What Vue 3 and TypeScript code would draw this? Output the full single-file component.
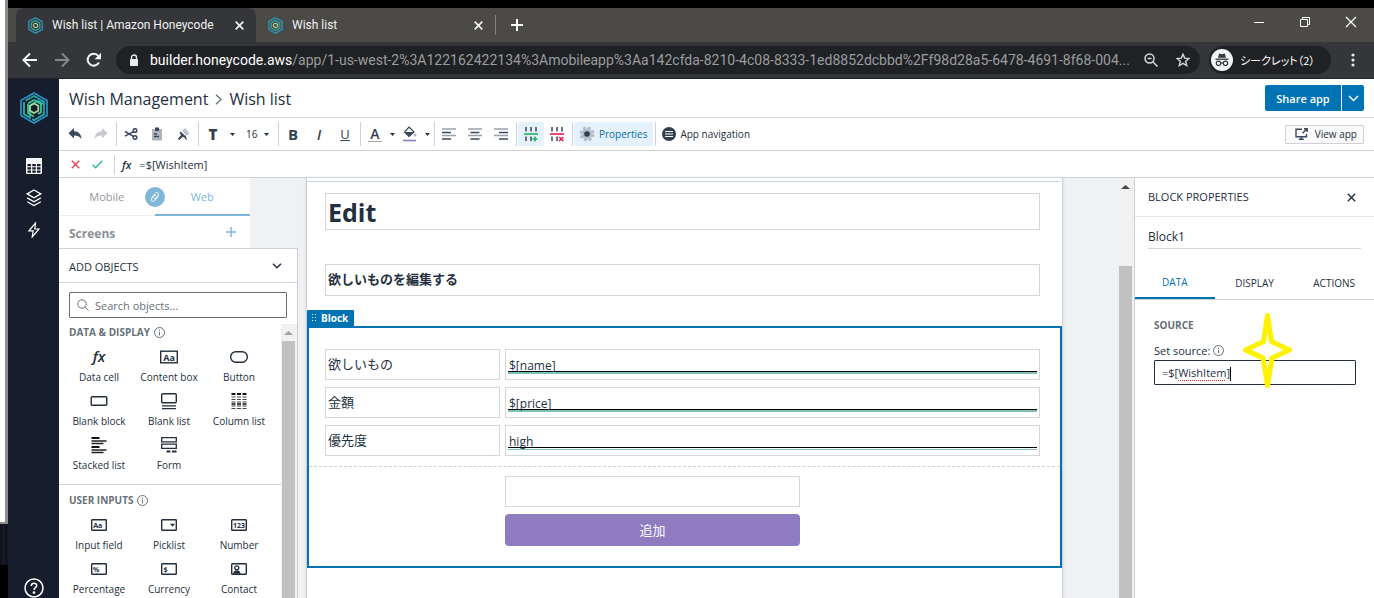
<script setup lang="ts">
import { ref } from 'vue'

interface PaletteItem {
  label: string
  icon: string
}
interface PaletteSection {
  title: string
  items: PaletteItem[]
}
interface FieldRow {
  id: string
  label: string
  value: string
  thin?: boolean
}

const box = '<rect x="4.7" y="2.7" width="14.6" height="10.6" rx="0.6" fill="none" stroke="#232f3e" stroke-width="1.4"/>'
const font = 'font-family="Open Sans, sans-serif" font-weight="700" fill="#232f3e"'

const paletteIcons: Record<string, string> = {
  fx: `<text x="12" y="13" text-anchor="middle" font-family="Open Sans, sans-serif" font-style="italic" font-weight="600" font-size="15" fill="#232f3e">fx</text>`,
  content: `<rect x="3.7" y="2.2" width="16.6" height="11.6" fill="none" stroke="#232f3e" stroke-width="1.4"/><text x="12" y="11.5" text-anchor="middle" font-size="9" ${font}>Aa</text>`,
  button: '<rect x="3.7" y="2.7" width="16.6" height="10.6" rx="5" fill="none" stroke="#232f3e" stroke-width="1.4"/>',
  block: '<rect x="4.2" y="3.7" width="15.6" height="8.6" rx="1" fill="none" stroke="#232f3e" stroke-width="1.4"/>',
  list: '<rect x="4.7" y="0.7" width="14.6" height="9" rx="1" fill="none" stroke="#232f3e" stroke-width="1.4"/><path d="M5 12.8h14M5 15.6h14" stroke="#232f3e" stroke-width="1.3"/>',
  columns: '<path d="M4.5 1h15" stroke="#111" stroke-width="2" stroke-dasharray="4 1.5"/><path d="M4.5 4h15M4.5 6.5h15M4.5 9h15M4.5 13h15M4.5 15.5h15" stroke="#444" stroke-width="1.2" stroke-dasharray="4 1.5"/><path d="M4.5 11h15" stroke="#111" stroke-width="1.5" stroke-dasharray="4 1.5"/>',
  stacked: '<path d="M4.5 1h8M4.5 10h8" stroke="#111" stroke-width="2.2"/><path d="M4.5 4h15M4.5 6.5h12M4.5 13h15M4.5 15.5h12" stroke="#222" stroke-width="1.3"/>',
  form: '<path d="M4.7 .7h14.6v4.2H4.7zM4.7 7.2h14.6v4.2H4.7z" fill="none" stroke="#232f3e" stroke-width="1.3"/><path d="M9.5 14.5h4M15 14.5h4.5" stroke="#232f3e" stroke-width="1.8"/>',
  input: `${box}<text x="6.2" y="10.7" font-size="7" ${font}>Aa</text>`,
  picklist: `${box}<path d="M13 6.8h5l-2.500 3z" fill="#232f3e"/>`,
  number: `${box}<text x="12" y="10.7" text-anchor="middle" font-size="7" ${font}>123</text>`,
  percent: `${box}<text x="6" y="10.7" font-size="7" ${font}>%</text>`,
  currency: `${box}<text x="6.5" y="10.7" font-size="7" ${font}>$</text>`,
  contact: `${box}<circle cx="9.8" cy="6.8" r="2" fill="none" stroke="#232f3e" stroke-width="1.3"/><path d="M6 12.8c.5-2.8 2-3.3 3.800-3.3s3.300.5 3.800 3.300z" fill="#232f3e"/>`,
}

const sections: PaletteSection[] = [
  {
    title: 'DATA & DISPLAY',
    items: [
      { label: 'Data cell', icon: 'fx' },
      { label: 'Content box', icon: 'content' },
      { label: 'Button', icon: 'button' },
      { label: 'Blank block', icon: 'block' },
      { label: 'Blank list', icon: 'list' },
      { label: 'Column list', icon: 'columns' },
      { label: 'Stacked list', icon: 'stacked' },
      { label: 'Form', icon: 'form' },
    ],
  },
  {
    title: 'USER INPUTS',
    items: [
      { label: 'Input field', icon: 'input' },
      { label: 'Picklist', icon: 'picklist' },
      { label: 'Number', icon: 'number' },
      { label: 'Percentage', icon: 'percent' },
      { label: 'Currency', icon: 'currency' },
      { label: 'Contact', icon: 'contact' },
    ],
  },
]

const fields = ref<FieldRow[]>([
  { id: 'name', label: '欲しいもの', value: '$[name]' },
  { id: 'price', label: '金額', value: '$[price]' },
  { id: 'priority', label: '優先度', value: 'high', thin: true },
])

const browserTabs = [
  { title: 'Wish list | Amazon Honeycode', active: true },
  { title: 'Wish list', active: false },
]

const propertyTabs = ['DATA', 'DISPLAY', 'ACTIONS']
const activeTab = ref('DATA')
const formula = ref('=$[WishItem]')
const fontSize = ref('16')
const blockName = ref('Block1')
const search = ref('')
const extra = ref('')
</script>

<template>
  <div class="desktop">
    <div class="behind" aria-hidden="true">
      <div class="behind-window"></div>
      <div class="behind-dark"></div>
    </div>
    <div class="browser">
      <header class="chrome">
        <div class="tabstrip">
          <div v-for="tab in browserTabs" :key="tab.title" class="btab" :class="{ active: tab.active }">
            <svg class="favicon" viewBox="0 0 28 32" width="15" height="17" fill="none">
              <path d="M14 1.500L26.500 8.500v15L14 30.500 1.500 23.500v-15z" stroke="#2f8fb5" stroke-width="2.600" />
              <path d="M14 6.500l8 4.700v9.600l-8 4.700-8-4.700v-9.600z" stroke="#2fa79b" stroke-width="2.400" />
              <circle cx="14" cy="16" r="4" stroke="#a8c98a" stroke-width="2.400" />
            </svg>
            <span class="btab-title">{{ tab.title }}</span>
            <button class="plain btab-close" aria-label="Close tab">
              <svg width="9" height="9" viewBox="0 0 9 9"><path d="M.7.7l7.600 7.600M8.300.7L.7 8.300" stroke="#f1f1f1" stroke-width="1.700" /></svg>
            </button>
          </div>
          <span class="btab-sep"></span>
          <button class="plain new-tab" aria-label="New tab">
            <svg width="12" height="12" viewBox="0 0 12 12"><path d="M6 0v12M0 6h12" stroke="#fff" stroke-width="2" /></svg>
          </button>
          <div class="window-buttons">
            <button class="plain" aria-label="Minimize"><svg width="12" height="12" viewBox="0 0 12 12"><path d="M1 6.500h10" stroke="#fff" /></svg></button>
            <button class="plain" aria-label="Restore"><svg width="12" height="12" viewBox="0 0 12 12" fill="none" stroke="#fff"><path d="M1.500 3.500h7v7h-7zM3.500 3.500v-2h7v7h-2" /></svg></button>
            <button class="plain" aria-label="Close"><svg width="12" height="12" viewBox="0 0 12 12"><path d="M1 1l10 10M11 1L1 11" stroke="#fff" stroke-width="1.200" /></svg></button>
          </div>
        </div>
        <div class="addressbar">
          <button class="plain nav" aria-label="Back"><svg width="16" height="16" viewBox="0 0 16 16" fill="none" stroke="#f1f3f4" stroke-width="2"><path d="M15 8H2.500M8 1.500L1.500 8 8 14.500" /></svg></button>
          <button class="plain nav" aria-label="Forward"><svg width="16" height="16" viewBox="0 0 16 16" fill="none" stroke="#85878a" stroke-width="2"><path d="M1 8h12.500M8 1.500L14.500 8 8 14.500" /></svg></button>
          <button class="plain nav" aria-label="Reload">
            <svg width="16" height="16" viewBox="0 0 16 16"><path d="M13 10.500A6 6 0 1 1 12.300 3.800" fill="none" stroke="#f1f3f4" stroke-width="2" /><path d="M15 .8v6.400H8.600z" fill="#f1f3f4" /></svg>
          </button>
          <div class="omnibox">
            <svg width="10" height="13" viewBox="0 0 10 13"><rect x="1" y="5" width="8" height="7" rx="1" fill="#e8eaed" /><path d="M2.500 5.500V3.500a2.500 2.500 0 0 1 5 0v2" fill="none" stroke="#e8eaed" stroke-width="1.400" /></svg>
            <span class="url"><b>builder.honeycode.aws</b>/app/1-us-west-2%3A122162422134%3Amobileapp%3Aa142cfda-8210-4c08-8333-1ed8852dcbbd%2Ff98d28a5-6478-4691-8f68-004...</span>
            <button class="plain" aria-label="Zoom"><svg width="14" height="14" viewBox="0 0 14 14" fill="none" stroke="#d5d7da" stroke-width="1.500"><circle cx="5.500" cy="5.500" r="4.500" /><path d="M9 9l4.500 4.500M3.500 5.500h4" /></svg></button>
            <button class="plain star" aria-label="Bookmark"><svg width="14" height="14" viewBox="0 0 14 14" fill="none" stroke="#d5d7da" stroke-width="1.400"><path d="M7 1.200l1.700 3.900 4.200.4-3.200 2.800 1 4.200L7 10.300l-3.700 2.200 1-4.200L1.100 5.500l4.200-.4z" /></svg></button>
          </div>
          <button class="plain incognito">
            <svg width="22" height="22" viewBox="0 0 22 22">
              <circle cx="11" cy="11" r="11" fill="#f1f3f4" />
              <path d="M7 8.800L8.200 4.500l2.800.7 2.800-.7L15 8.800z" fill="#35363a" />
              <path d="M4.500 10.200h13" stroke="#35363a" stroke-width="1.300" />
              <g fill="none" stroke="#35363a" stroke-width="1.200"><circle cx="7.500" cy="14.300" r="2.200" /><circle cx="14.500" cy="14.300" r="2.200" /><path d="M9.700 14h2.600" /></g>
            </svg>
            <span>シークレット（2）</span>
          </button>
          <button class="plain kebab" aria-label="Menu"><svg width="4" height="14" viewBox="0 0 4 14" fill="#e8eaed"><circle cx="2" cy="2" r="1.600" /><circle cx="2" cy="7" r="1.600" /><circle cx="2" cy="12" r="1.600" /></svg></button>
        </div>
      </header>

      <div class="app">
        <nav class="rail" aria-label="Main">
          <a href="#" class="logo" aria-label="Honeycode">
            <svg viewBox="0 0 28 32" width="28" height="32" fill="none" stroke-width="1.800">
              <path d="M14 1L27 8.500v15L14 31 1 23.500v-15z" stroke="#2a8cc4" />
              <path d="M4 10v12.200l6 3.500V13.500l8-4.600 6 3.500" stroke="#2bb0a8" />
              <path d="M5.500 8.800L14 4l10 5.800v8.500M12 27l2 1.200 10-5.800v-4" stroke="#2ba5a5" />
              <path d="M8 11.500L14 8l7 4v8.200l-3 1.700M14 24.500l-6-3.500v-9" stroke="#3cc4a4" />
              <path d="M14 11.500l4.300 2.300v5L14 21l-4-2.300v-5z" stroke="#a9d88f" />
            </svg>
          </a>
          <a href="#" aria-label="Tables"><svg width="16" height="16" viewBox="0 0 16 16"><rect width="16" height="16" rx="1" fill="#f5f6f7" /><g fill="#161e2d"><path d="M1.500 6h3.500v2.300H1.500zM6.300 6h3.500v2.300H6.300zM11 6h3.500v2.300H11zM1.500 9.300h3.500v2.300H1.500zM6.300 9.300h3.500v2.300H6.300zM11 9.300h3.500v2.300H11zM1.500 12.600h3.500v2.200H1.500zM6.300 12.600h3.500v2.200H6.300zM11 12.600h3.500v2.200H11z" /></g></svg></a>
          <a href="#" aria-label="Apps"><svg width="16" height="18" viewBox="0 0 16 18" fill="none" stroke="#fff" stroke-width="1.300"><path d="M8 1l6.800 3.900L8 8.800 1.200 4.900z" /><path d="M1.200 8.900L8 12.800l6.800-3.900M1.200 12.700L8 16.600l6.800-3.900" /></svg></a>
          <a href="#" aria-label="Automations"><svg width="12" height="16" viewBox="0 0 12 16" fill="none" stroke="#fff" stroke-width="1.200"><path d="M7.500 1L1 8.800h4.200L4.200 15 11 7H6.800z" /></svg></a>
          <a href="#" class="help" aria-label="Help"><svg width="20" height="20" viewBox="0 0 20 20" fill="none" stroke="#fff" stroke-width="1.500"><circle cx="10" cy="10" r="9" /><path d="M7.300 8c0-3.700 5.600-3.500 5.400-.2C12.600 9.600 10 9.800 10 12" /><circle cx="10" cy="14.600" r=".6" fill="#fff" /></svg></a>
        </nav>

        <div class="workspace">
          <div class="titlebar">
            <h1><a href="#">Wish Management</a>
              <svg width="7" height="11" viewBox="0 0 7 11" fill="none" stroke="#687078" stroke-width="1.300"><path d="M1 .8l5 4.700-5 4.700" /></svg>
              <span>Wish list</span></h1>
            <div class="share">
              <button class="plain share-main">Share app</button>
              <button class="plain share-more" aria-label="Share options"><svg width="11" height="7" viewBox="0 0 11 7" fill="none" stroke="#fff" stroke-width="1.500"><path d="M1 1l4.500 4.500L10 1" /></svg></button>
            </div>
          </div>

          <div class="toolbar" role="toolbar" aria-label="Formatting">
            <button class="plain tool" aria-label="Undo"><svg width="14" height="12" viewBox="0 0 14 12"><path d="M6 0v3.200c4.500.2 7.300 2.800 7.500 8C12 8.600 10 7.400 6 7.400v3.200L.5 5.300z" fill="#3b475a" /></svg></button>
            <button class="plain tool" aria-label="Redo"><svg width="14" height="12" viewBox="0 0 14 12"><path d="M8 0v3.200C3.500 3.400.7 6 .5 11.200 2 8.600 4 7.400 8 7.400v3.200l5.500-5.300z" fill="#c6cad0" /></svg></button>
            <span class="sep"></span>
            <button class="plain tool" aria-label="Cut"><svg width="14" height="12" viewBox="0 0 14 12" fill="none" stroke="#3b475a" stroke-width="1.500"><circle cx="11" cy="2.500" r="1.800" /><circle cx="11" cy="9.500" r="1.800" /><path d="M9.400 3.600L1 8.200M9.400 8.400L1 3.500" /></svg></button>
            <button class="plain tool" aria-label="Paste"><svg width="12" height="14" viewBox="0 0 12 14"><path d="M1 2h10v11.500H1z" fill="#aeb4bd" /><path d="M4 .5h4V4H4z" fill="#3b475a" /><path d="M3 7h3M3 9.500h5" stroke="#3b475a" stroke-width="1.300" /></svg></button>
            <button class="plain tool" aria-label="Paste format"><svg width="14" height="14" viewBox="0 0 14 14"><path d="M6 4l3-3 4.500 5-3 3z" fill="#bfc4cb" /><path d="M4.500 4.500l5.500 5-1.500 1.200-1.700-1L3.500 13 1.800 12 5 8 3.500 6z" fill="#3b475a" /><path d="M8.500 9l2 3.500" stroke="#3b475a" stroke-width="1.500" /></svg></button>
            <span class="sep"></span>
            <button class="plain tool glyph-t" aria-label="Text style">T</button>
            <button class="plain caret" aria-label="Text style options"><svg width="5" height="3" viewBox="0 0 5 3"><path d="M0 0h5L2.500 3z" fill="#232f3e" /></svg></button>
            <label class="size">
              <select v-model="fontSize" aria-label="Font size"><option>14</option><option>16</option><option>18</option></select>
              <svg width="5" height="3" viewBox="0 0 5 3"><path d="M0 0h5L2.500 3z" fill="#232f3e" /></svg>
            </label>
            <span class="sep"></span>
            <button class="plain tool glyph-b" aria-label="Bold">B</button>
            <button class="plain tool glyph-i" aria-label="Italic">I</button>
            <button class="plain tool glyph-u" aria-label="Underline">U</button>
            <span class="sep"></span>
            <button class="plain tool glyph-a" aria-label="Text colour"><span>A</span></button>
            <button class="plain caret narrow" aria-label="Text colour options"><svg width="5" height="3" viewBox="0 0 5 3"><path d="M0 0h5L2.500 3z" fill="#232f3e" /></svg></button>
            <button class="plain tool" aria-label="Fill colour"><svg width="14" height="16" viewBox="0 0 14 16"><path d="M6 1l5 5-5 4.500L1.500 6z" fill="none" stroke="#3b475a" stroke-width="1.200" /><path d="M1.500 6h9.500L6 10.500z" fill="#3b475a" /><circle cx="12" cy="9" r="1.500" fill="#b4bac2" /><path d="M0 14.500h13" stroke="#8d7cc3" stroke-width="1.600" /></svg></button>
            <button class="plain caret narrow" aria-label="Fill colour options"><svg width="5" height="3" viewBox="0 0 5 3"><path d="M0 0h5L2.500 3z" fill="#232f3e" /></svg></button>
            <span class="sep"></span>
            <button class="plain tool" aria-label="Align left"><svg width="14" height="12" viewBox="0 0 14 12"><path d="M0 1h14M0 7.500h14" stroke="#9aa1ab" stroke-width="1.500" /><path d="M0 4.500h9M0 11h9" stroke="#3b475a" stroke-width="1.500" /></svg></button>
            <button class="plain tool" aria-label="Align centre"><svg width="14" height="12" viewBox="0 0 14 12"><path d="M0 1h14M0 7.500h14" stroke="#9aa1ab" stroke-width="1.500" /><path d="M2.500 4.500h9M2.500 11h9" stroke="#3b475a" stroke-width="1.500" /></svg></button>
            <button class="plain tool" aria-label="Align right"><svg width="14" height="12" viewBox="0 0 14 12"><path d="M0 1h14M0 7.500h14" stroke="#9aa1ab" stroke-width="1.500" /><path d="M5 4.500h9M5 11h9" stroke="#3b475a" stroke-width="1.500" /></svg></button>
            <span class="sep"></span>
            <button class="plain tool on" aria-label="Add row"><svg width="14" height="16" viewBox="0 0 14 16"><path d="M2 1v4.500M7 1v4.500M12 1v4.500M2 10.500V15M7 10.500V15" stroke="#3b475a" stroke-width="1.500" /><path d="M0 8h14" stroke="#1db35a" stroke-width="1.600" /><path d="M11 10.500v5M8.500 13h5" stroke="#1db35a" stroke-width="1.600" /></svg></button>
            <button class="plain tool" aria-label="Delete row"><svg width="14" height="16" viewBox="0 0 14 16"><path d="M2 1v4.500M7 1v4.500M12 1v4.500M2 10.500V15M7 10.500V15" stroke="#3b475a" stroke-width="1.500" /><path d="M0 8h14" stroke="#e8174f" stroke-width="1.600" /><path d="M9.200 11l4 4M13.200 11l-4 4" stroke="#e8174f" stroke-width="1.600" /></svg></button>
            <span class="sep"></span>
            <button class="plain wide on"><svg width="16" height="16" viewBox="0 0 16 16"><circle cx="8" cy="8" r="5.500" fill="#b3bfca" /><circle cx="8" cy="8" r="6.300" fill="none" stroke="#b3bfca" stroke-width="2.400" stroke-dasharray="3 1.950" /><circle cx="8" cy="8" r="2.800" fill="#2f3d4f" /></svg>Properties</button>
            <span class="sep"></span>
            <button class="plain wide"><svg width="14" height="14" viewBox="0 0 14 14"><circle cx="7" cy="7" r="7" fill="#333f50" /><path d="M3 4.500h8M3 7h8M3 9.500h8" stroke="#fff" stroke-width="1.200" /></svg>App navigation</button>
            <button class="view-app"><svg width="13" height="12" viewBox="0 0 13 12" fill="none" stroke="#3b475a" stroke-width="1.400"><path d="M7 1.200H1v7.600h10.500V6M6.300 9v2M3.800 11.200h5M7.500 5.200l4-4M9 .8h3.200V4" /></svg>View app</button>
          </div>

          <div class="formula">
            <button class="plain tool" aria-label="Cancel"><svg width="9" height="9" viewBox="0 0 9 9"><path d="M.8.8l7.400 7.400M8.200.8L.8 8.200" stroke="#ee3f44" stroke-width="1.300" /></svg></button>
            <button class="plain confirm" aria-label="Accept"><svg width="11" height="9" viewBox="0 0 11 9" fill="none" stroke="#1fbf9c" stroke-width="1.300"><path d="M.7 4.800l3 3L10.300.8" /></svg></button>
            <label for="formula">fx</label>
            <input id="formula" v-model="formula" type="text" spellcheck="false" />
          </div>

          <div class="stage">
            <aside class="left">
              <div class="screens">
                <div class="device-tabs">
                  <button class="plain">Mobile</button>
                  <button class="plain current">Web</button>
                  <span class="link-badge"><svg width="20" height="20" viewBox="0 0 20 20" fill="none" stroke="#fff" stroke-width="1"><circle cx="10" cy="10" r="10" fill="#7fb7d8" stroke="none" /><path d="M8.300 10.500l1.700-3.700c1-2.300 4.300-1.300 3.500.9l-1.300 3c-.8 1.700-2.700 1.400-3 .3M11.700 9.300l-1.700 3.800c-1 2.200-4.300 1.200-3.500-1l1.300-3c.8-1.600 2.700-1.300 3-.2" /></svg></span>
                </div>
                <div class="screens-head"><h2>Screens</h2>
                  <button class="plain" aria-label="Add screen"><svg width="10" height="10" viewBox="0 0 10 10"><path d="M5 0v10M0 5h10" stroke="#7fb7d8" stroke-width="1.500" /></svg></button></div>
              </div>
              <div class="objects">
                <div class="objects-head"><h2>ADD OBJECTS</h2>
                  <button class="plain" aria-label="Collapse"><svg width="10" height="6" viewBox="0 0 10 6" fill="none" stroke="#232f3e" stroke-width="1.500"><path d="M1 .7l4 4 4-4" /></svg></button></div>
                <label class="search">
                  <svg width="12" height="12" viewBox="0 0 12 12" fill="none" stroke="#687078"><circle cx="5" cy="5" r="4.200" /><path d="M8.200 8.200L11.600 11.600" /></svg>
                  <input v-model="search" type="text" placeholder="Search objects..." aria-label="Search objects" />
                </label>
                <div class="palette">
                  <div class="palette-body">
                    <section v-for="s in sections" :key="s.title">
                      <h3>{{ s.title }}
                        <svg width="11" height="11" viewBox="0 0 11 11" fill="none" stroke="#687078"><circle cx="5.500" cy="5.500" r="5" /><path d="M5.500 4.800v3.500M5.500 2.700v1.200" /></svg></h3>
                      <div class="items">
                        <button v-for="item in s.items" :key="item.label" class="plain item">
                          <svg width="24" height="17" viewBox="0 0 24 17" v-html="paletteIcons[item.icon]"></svg>
                          <span>{{ item.label }}</span>
                        </button>
                      </div>
                    </section>
                  </div>
                  <div class="scroll small" aria-hidden="true"><svg width="13" height="4" viewBox="0 0 13 4"><path d="M2 4h9L6.500 0z" fill="#a3a3a3" /></svg><i></i></div>
                </div>
              </div>
            </aside>

            <main class="canvas">
              <div class="paper">
                <div class="edge"></div>
                <h2 class="cell heading">Edit</h2>
                <p class="cell sub">欲しいものを編集する</p>
                <div class="block-tag"><svg width="5" height="9" viewBox="0 0 5 9" fill="#fff"><path d="M0 0h1v1H0zM3 0h1v1H3zM0 3h1v1H0zM3 3h1v1H3zM0 6h1v1H0zM3 6h1v1H3z" /></svg>Block</div>
                <form class="block" @submit.prevent>
                  <div class="rows">
                    <template v-for="f in fields" :key="f.id">
                      <label class="cell" :for="f.id">{{ f.label }}</label>
                      <div class="cell value"><input :id="f.id" v-model="f.value" type="text" spellcheck="false" :class="{ thin: f.thin }" /></div>
                    </template>
                  </div>
                  <div class="actions">
                    <input v-model="extra" class="cell" type="text" aria-label="Value" />
                    <button class="plain add">追加</button>
                  </div>
                </form>
              </div>
              <div class="scroll" aria-hidden="true"><svg width="13" height="4" viewBox="0 0 13 4"><path d="M2 4h9L6.500 0z" fill="#444" /></svg><i></i></div>
            </main>

            <aside class="props">
              <div class="props-head"><h2>BLOCK PROPERTIES</h2>
                <button class="plain" aria-label="Close"><svg width="9" height="9" viewBox="0 0 9 9"><path d="M.8.8l7.400 7.400M8.200.8L.8 8.200" stroke="#232f3e" stroke-width="1.400" /></svg></button></div>
              <input v-model="blockName" class="name" type="text" aria-label="Block name" />
              <div class="prop-tabs" role="tablist">
                <button v-for="t in propertyTabs" :key="t" class="plain" role="tab" :class="{ current: t === activeTab }" @click="activeTab = t">{{ t }}</button>
              </div>
              <section class="source">
                <h3>SOURCE</h3>
                <label for="source">Set source:
                  <svg width="11" height="11" viewBox="0 0 11 11" fill="none" stroke="#687078"><circle cx="5.500" cy="5.500" r="5" /><path d="M5.500 4.800v3.500M5.500 2.700v1.200" /></svg></label>
                <div class="source-box">
                  <div id="source" class="source-text" role="textbox" contenteditable="true" spellcheck="false">=$[<span class="typo">WishItem</span>]<i class="cursor"></i></div>
                  <svg class="sparkle" width="51" height="77" viewBox="0 0 51 77" fill="none"><path d="M25.500 3.500L29.500 29.500L47.500 38L30 46L25.500 73.500L21 46L3.500 38L21.500 29.500z" stroke="#fff200" stroke-width="5" stroke-linejoin="round" /></svg>
                </div>
              </section>
            </aside>
          </div>
        </div>
      </div>
    </div>
  </div>
</template>

<style>
body {
  margin: 0;
  background: #000;
}
</style>

<style scoped>
* {
  box-sizing: border-box;
}
h1, h2, h3, p {
  margin: 0;
  font-weight: 400;
}
svg {
  flex: none;
  display: block;
}
a {
  color: inherit;
  text-decoration: none;
}
input, select, button {
  font: inherit;
  color: inherit;
  border-radius: 0;
}
input {
  min-width: 0;
  outline: none;
}
.plain {
  display: flex;
  align-items: center;
  justify-content: center;
  padding: 0;
  border: 0;
  background: none;
}
.desktop {
  display: flex;
  height: 100vh;
  overflow: hidden;
  background: #000;
  font-family: "Open Sans", "Noto Sans CJK JP", sans-serif;
  font-size: 11px;
  color: #232f3e;
}
.behind {
  flex: none;
  width: 8px;
  display: flex;
  flex-direction: column;
  background: #000;
}
.behind-window {
  height: 524px;
  background: #fff;
  border: solid #8c8c8c;
  border-width: 0 3px 2px 0;
}
.behind-dark {
  height: 41px;
  background: #1b2230;
  border-right: 4px solid #10151d;
  border-left: 3px solid #10151d;
}
.browser {
  flex: 1;
  min-width: 0;
  display: flex;
  flex-direction: column;
  padding-top: 8px;
}

/* Browser chrome */
.tabstrip {
  display: flex;
  height: 34px;
  padding-left: 8px;
  background: #4b4a46;
  color: #f1f1f1;
  font-family: Roboto, sans-serif;
  font-size: 12px;
}
.btab {
  display: flex;
  align-items: center;
  width: 239px;
  padding: 0 12px;
}
.btab.active {
  width: 240px;
  background: #35363a;
  border-radius: 8px 8px 0 0;
}
.favicon {
  margin-right: 9px;
}
.btab-title {
  flex: 1;
  white-space: nowrap;
}
.btab-sep {
  width: 1px;
  height: 20px;
  margin-top: 7px;
  background: #85837f;
}
.new-tab {
  width: 42px;
}
.window-buttons {
  display: flex;
  margin-left: auto;
}
.window-buttons .plain {
  width: 46px;
  height: 28px;
}
.addressbar {
  display: flex;
  align-items: center;
  height: 37px;
  padding-left: 6px;
  background: #35363a;
  border-bottom: 1px solid #232429;
}
.nav {
  width: 32px;
  height: 32px;
}
.omnibox {
  flex: 1;
  min-width: 0;
  display: flex;
  align-items: center;
  height: 28px;
  margin-left: 6px;
  padding: 0 10px 0 13px;
  border-radius: 14px;
  background: #202124;
  color: #9a9c9f;
  font-family: Roboto, sans-serif;
  font-size: 14px;
}
.url {
  flex: 1;
  margin: 0 8px 0 11px;
  white-space: nowrap;
  overflow: hidden;
}
.url b {
  font-weight: 400;
  color: #fff;
}
.star {
  margin-left: 18px;
}
.incognito {
  width: 122px;
  height: 28px;
  margin-left: 9px;
  padding-left: 2px;
  justify-content: flex-start;
  gap: 7px;
  border-radius: 14px;
  background: #202124;
  color: #fff;
  font-family: "Noto Sans CJK JP", sans-serif;
  font-size: 11px;
  font-feature-settings: "palt";
  white-space: nowrap;
}
.kebab {
  width: 43px;
  height: 28px;
}

/* App shell */
.app {
  flex: 1;
  min-height: 0;
  display: flex;
  background: #fff;
}
.rail {
  flex: none;
  display: flex;
  flex-direction: column;
  align-items: center;
  width: 51px;
  padding-top: 13px;
  background: #161e2d;
}
.rail a {
  display: grid;
  place-items: center;
  height: 32px;
}
.rail .logo {
  margin-bottom: 26px;
}
.rail .help {
  margin-top: auto;
  height: 20px;
}
.workspace {
  flex: 1;
  min-width: 0;
  display: flex;
  flex-direction: column;
}
.titlebar {
  flex: none;
  display: flex;
  align-items: center;
  justify-content: space-between;
  height: 39px;
  padding: 0 10px;
  border-bottom: 1px solid #ccd1d8;
}
h1 {
  display: flex;
  align-items: center;
  gap: 7px;
  padding-top: 2px;
  font-size: 16px;
}
.share {
  display: flex;
  gap: 1px;
  height: 26px;
  color: #fff;
  font-size: 11px;
  font-weight: 600;
}
.share-main {
  width: 76px;
  background: #0073b4;
  border-radius: 2px 0 0 2px;
}
.share-more {
  width: 22px;
  background: #0073b4;
  border-radius: 0 2px 2px 0;
}
.toolbar {
  flex: none;
  display: flex;
  align-items: center;
  height: 33px;
  padding: 0 10px 0 3px;
  border-bottom: 1px solid #ccd1d8;
  font-size: 10px;
}
.tool {
  width: 26px;
  height: 24px;
  color: #333f50;
}
.sep {
  width: 1px;
  height: 24px;
  margin: 0 1px 0 2px;
  background: #ccd1d8;
}
.caret {
  width: 12px;
  height: 24px;
}
.caret.narrow {
  width: 9px;
}
.on {
  background: #e5f2fe;
  border-radius: 2px;
}
.glyph-t, .glyph-b {
  font-size: 15px;
  font-weight: 800;
}
.glyph-b {
  font-weight: 700;
}
.glyph-i {
  font-size: 14px;
  font-style: italic;
  font-weight: 600;
}
.glyph-u {
  font-size: 13px;
  text-decoration: underline;
}
.glyph-a {
  font-size: 14px;
  font-weight: 600;
}
.glyph-a span {
  line-height: 14px;
  padding: 0 2px;
  border-bottom: 1px solid #a9a9a9;
}
.size {
  display: flex;
  align-items: center;
  width: 38px;
  padding-left: 8px;
}
.size select {
  width: 18px;
  padding: 0;
  border: 0;
  background: none;
  appearance: none;
}
.wide {
  height: 24px;
  padding: 0 6px 0 5px;
  gap: 4px;
}
.wide.on {
  color: #0a6ca8;
}
.view-app {
  display: flex;
  align-items: center;
  justify-content: space-between;
  width: 79px;
  height: 19px;
  margin-left: auto;
  padding: 0 6px 0 9px;
  border: 1px solid #ccd1d8;
  border-radius: 1px;
  background: #fafafa;
}
.formula {
  flex: none;
  display: flex;
  align-items: center;
  height: 27px;
  padding-left: 3px;
  border-bottom: 1px solid #ccd1d8;
}
.confirm {
  width: 18px;
  height: 20px;
}
.formula label {
  margin-left: 8px;
  padding-left: 7px;
  border-left: 1px solid #ccd1d8;
  line-height: 19px;
  font-weight: 600;
  font-style: italic;
}
.formula input {
  flex: 1;
  margin-left: 8px;
  padding: 0;
  border: 0;
}

/* Left column */
.stage {
  flex: 1;
  min-height: 0;
  display: flex;
  background: #eff1f3;
}
.left {
  flex: none;
  display: flex;
  flex-direction: column;
  width: 239px;
}
.screens {
  width: 191px;
  background: #fff;
}
.device-tabs {
  position: relative;
  display: grid;
  grid-template-columns: 1fr 1fr;
  height: 38px;
  border-bottom: 1px solid #eceef0;
  color: #92969d;
}
.device-tabs .plain {
  height: 38px;
  border-bottom: 2px solid transparent;
}
.device-tabs .current {
  border-color: #7fb7d8;
  color: #7fb7d8;
}
.link-badge {
  position: absolute;
  left: 50%;
  top: 9px;
  margin-left: -10px;
}
.screens-head {
  display: flex;
  align-items: center;
  justify-content: space-between;
  height: 32px;
  padding: 0 14px 0 10px;
}
.screens-head h2 {
  padding-top: 2px;
  color: #8b9097;
  font-size: 12px;
  font-weight: 700;
}
.objects {
  flex: 1;
  min-height: 0;
  display: flex;
  flex-direction: column;
  border: solid #ccd1d8;
  border-width: 1px 1px 0 0;
  background: #fff;
}
.objects-head {
  flex: none;
  display: flex;
  align-items: center;
  justify-content: space-between;
  height: 34px;
  padding: 0 15px 0 10px;
  border-bottom: 1px solid #ccd1d8;
}
.objects-head h2, .props-head h2 {
  font-size: 11px;
}
.objects-head h2 {
  padding-top: 2px;
}
.search {
  flex: none;
  display: flex;
  align-items: center;
  gap: 6px;
  height: 26px;
  margin: 9px 10px 6px;
  padding: 0 7px;
  border: 1px solid #687078;
  border-radius: 1px;
}
.search input {
  flex: 1;
  padding: 0;
  border: 0;
}
.search input::placeholder {
  color: #687078;
}
.palette {
  flex: 1;
  min-height: 0;
  display: flex;
  overflow: hidden;
}
.palette-body {
  flex: 1;
}
.palette section + section {
  border-top: 1px solid #ccd1d8;
}
h3 {
  display: flex;
  align-items: center;
  gap: 4px;
  color: #687078;
  font-size: 10px;
  font-weight: 700;
}
.palette h3 {
  height: 16px;
  margin: 0 10px;
}
.palette section + section h3 {
  margin-top: 7px;
}
.items {
  display: grid;
  grid-template-columns: repeat(3, 70px);
  padding: 9px 5px 3px;
}
.item {
  flex-direction: column;
  justify-content: flex-start;
  gap: 4px;
  height: 44px;
  font-size: 10px;
  line-height: 14px;
  white-space: nowrap;
}
.item svg {
  overflow: visible;
}
.scroll {
  flex: none;
  width: 16px;
  padding: 7px 0 0 1px;
  display: flex;
  flex-direction: column;
  background: #f1f1f1;
}
.scroll i {
  flex: 1;
  width: 13px;
  margin-top: 77px;
  background: #c1c1c1;
}
.scroll.small i {
  margin-top: 6px;
}

/* Canvas */
.canvas {
  flex: 1;
  min-width: 0;
  display: flex;
}
.paper {
  flex: 1;
  min-width: 0;
  margin: 0 55px 0 8px;
  border: solid #ccd1d8;
  border-width: 0 1px;
  background: #fff;
  font-size: 13px;
  box-shadow: 0 0 3px #d5d8dc;
}
.edge {
  height: 4px;
  margin-right: 2px;
  border-bottom: 1px solid #ccd1d8;
}
.cell {
  height: 31px;
  padding: 0 2px;
  border: 1px solid #d5d6da;
  background: #fff;
  line-height: 29px;
}
.heading {
  height: 37px;
  margin: 11px 22px 34px 18px;
  font-size: 25px;
  font-weight: 700;
  line-height: 36px;
}
.sub {
  height: 32px;
  margin: 0 22px 14px 18px;
  font-weight: 700;
}
.block-tag {
  display: flex;
  align-items: center;
  gap: 4px;
  width: 47px;
  height: 16px;
  padding-left: 5px;
  border-radius: 1px 1px 0 0;
  background: #0073b4;
  color: #fff;
  font-size: 10px;
  font-weight: 700;
}
.block {
  padding-top: 21px;
  border: 2px solid #0073b4;
}
.rows {
  display: grid;
  grid-template-columns: 175px 1fr;
  gap: 7px 5px;
  padding: 0 20px 10px 16px;
}
.value input {
  display: block;
  width: 100%;
  height: 29px;
  padding: 2px 0 0 1px;
  border: 0;
  background: linear-gradient(transparent 21px, #000 21px 22px, #7dc0b8 22px 24px, transparent 24px);
  font-size: 12px;
}
.value input.thin {
  background: linear-gradient(transparent 21px, #000 21px 22px, #fff 22px 23px, #7dc0b8 23px 24px, transparent 24px);
}
.actions {
  display: grid;
  grid-template-columns: 295px;
  gap: 7px;
  padding: 9px 20px 20px 196px;
  border-top: 1px dashed #ccd1d8;
}
.add {
  height: 32px;
  padding-bottom: 2px;
  border-radius: 4px;
  background: #8e7cc1;
  color: #fff;
}

/* Properties */
.props {
  flex: none;
  width: 240px;
  border-left: 1px solid #ccd1d8;
  background: #fff;
}
.props-head {
  display: flex;
  align-items: center;
  justify-content: space-between;
  height: 39px;
  padding: 0 18px 0 13px;
  border-bottom: 1px solid #e6e8eb;
}
.props-head h2 {
  padding-bottom: 2px;
}
.name {
  display: block;
  width: calc(100% - 26px);
  height: 23px;
  margin: 9px 13px 0;
  padding: 0 0 2px;
  border: 0;
  border-bottom: 1px solid #d5d6da;
  font-size: 12px;
}
.prop-tabs {
  display: grid;
  grid-template-columns: repeat(3, 1fr);
  height: 34px;
  margin-top: 17px;
  border-bottom: 1px solid #ccd1d8;
  font-size: 10px;
}
.prop-tabs .current {
  border-bottom: 2px solid #0073b4;
  color: #0073b4;
}
.source {
  padding: 17px 18px 0 19px;
}
.source h3 {
  height: 16px;
}
.source label {
  display: flex;
  align-items: center;
  gap: 3px;
  height: 16px;
  margin: 9px 0 2px;
}
.source-box {
  position: relative;
}
.source-text {
  height: 25px;
  padding: 0 7px;
  border: 1px solid #232f3e;
  border-radius: 1px;
  line-height: 23px;
  outline: none;
}
.typo {
  text-decoration: underline dotted #e8201a 1px;
  text-decoration-skip-ink: none;
  text-underline-offset: 3px;
}
.cursor {
  display: inline-block;
  width: 1px;
  height: 14px;
  background: #000;
  vertical-align: middle;
}
.sparkle {
  position: absolute;
  left: 88px;
  top: -48px;
  pointer-events: none;
}
</style>
